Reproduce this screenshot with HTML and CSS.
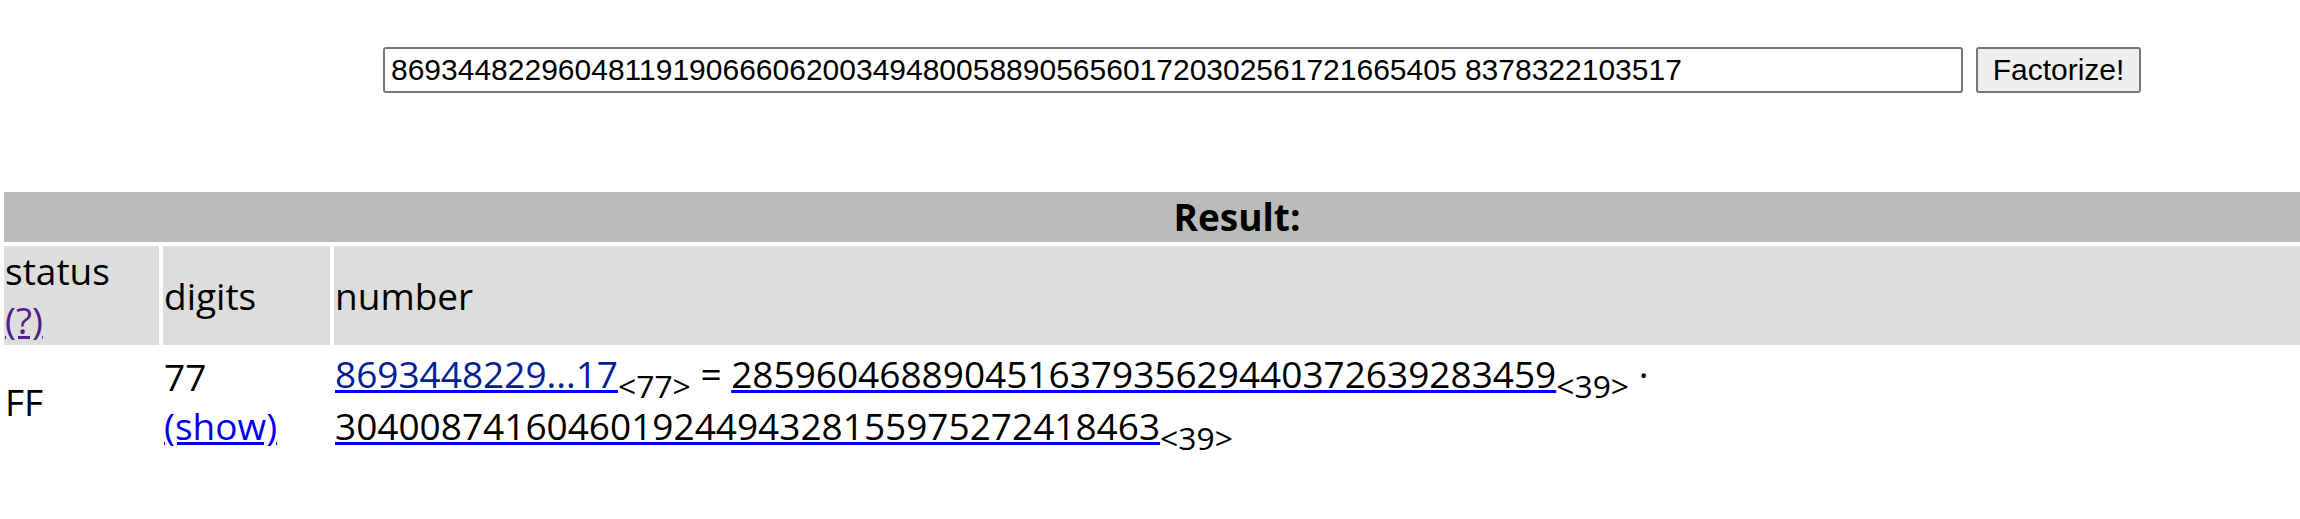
FILE: index.html
```html
<!DOCTYPE html>
<html>
<head>
<meta charset="utf-8">
<link rel="stylesheet" href="styles.css">
<title>factordb</title>
</head>
<body>
<form class="search">
  <input class="num-input" type="text" value="8693448229604811919066606200349480058890565601720302561721665405 8378322103517">
  <button class="go" type="button">Factorize!</button>
</form>
<table class="result">
  <colgroup>
    <col class="col-status">
    <col class="col-digits">
    <col class="col-number">
  </colgroup>
  <tr>
    <td class="title" colspan="3"><b>Result:</b></td>
  </tr>
  <tr class="head">
    <td class="top">status<br><a class="visited" href="#">(?)</a></td>
    <td>digits</td>
    <td>number</td>
  </tr>
  <tr class="data">
    <td>FF</td>
    <td>77<br><a class="show" href="#">(show)</a></td>
    <td><a class="num" href="#"><span class="navy">8693448229...17</span></a><sub>&lt;77&gt;</sub> = <a class="num" href="#"><span class="black">285960468890451637935629440372639283459</span></a><sub>&lt;39&gt;</sub> · <a class="num" href="#"><span class="black">304008741604601924494328155975272418463</span></a><sub>&lt;39&gt;</sub></td>
  </tr>
</table>
</body>
</html>
```
FILE: styles.css
```css
html, body {
  margin: 0;
  padding: 0;
  background: #ffffff;
  overflow: hidden;
}

.search {
  display: flex;
  align-items: center;
  gap: 13px;
  margin: 47px 0 0 383px;
  height: 46px;
}

.num-input {
  box-sizing: border-box;
  width: 1580px;
  height: 46px;
  border: 2px solid #767676;
  border-radius: 3px;
  padding: 0 6px;
  font-family: "Liberation Sans", Arial, sans-serif;
  font-size: 30px;
  color: #000;
  background: #fff;
}

.go {
  box-sizing: border-box;
  width: 165px;
  height: 46px;
  border: 2px solid #767676;
  border-radius: 3px;
  background: #efefef;
  font-family: "Liberation Sans", Arial, sans-serif;
  font-size: 30px;
  color: #000;
  padding: 0;
}

.result {
  margin-top: 95px;
  width: 2474px;
  table-layout: fixed;
  border-collapse: separate;
  border-spacing: 4px;
  font-family: "Open Sans", "Noto Sans", sans-serif;
  font-size: 37px;
  color: #000;
}

.col-status { width: 155px; }
.col-digits { width: 167px; }

.result td {
  padding: 1px;
  line-height: 1.31;
  vertical-align: middle;
  text-align: left;
}

.result td.title {
  background: #bbbbbb;
  text-align: center;
}

.head td {
  background: #dddddd;
}

.head td.top {
  vertical-align: top;
}

a { text-decoration: underline; text-underline-offset: 2px; }
a.visited { color: #551a8b; }
a.show { color: #0000ee; }
a.num { color: #0000ee; text-decoration-color: #0000ff; }
.navy { color: #002099; }
.black { color: #000000; }

sub {
  font-size: 0.86em;
  vertical-align: -0.3em;
  line-height: 1;
}
```
